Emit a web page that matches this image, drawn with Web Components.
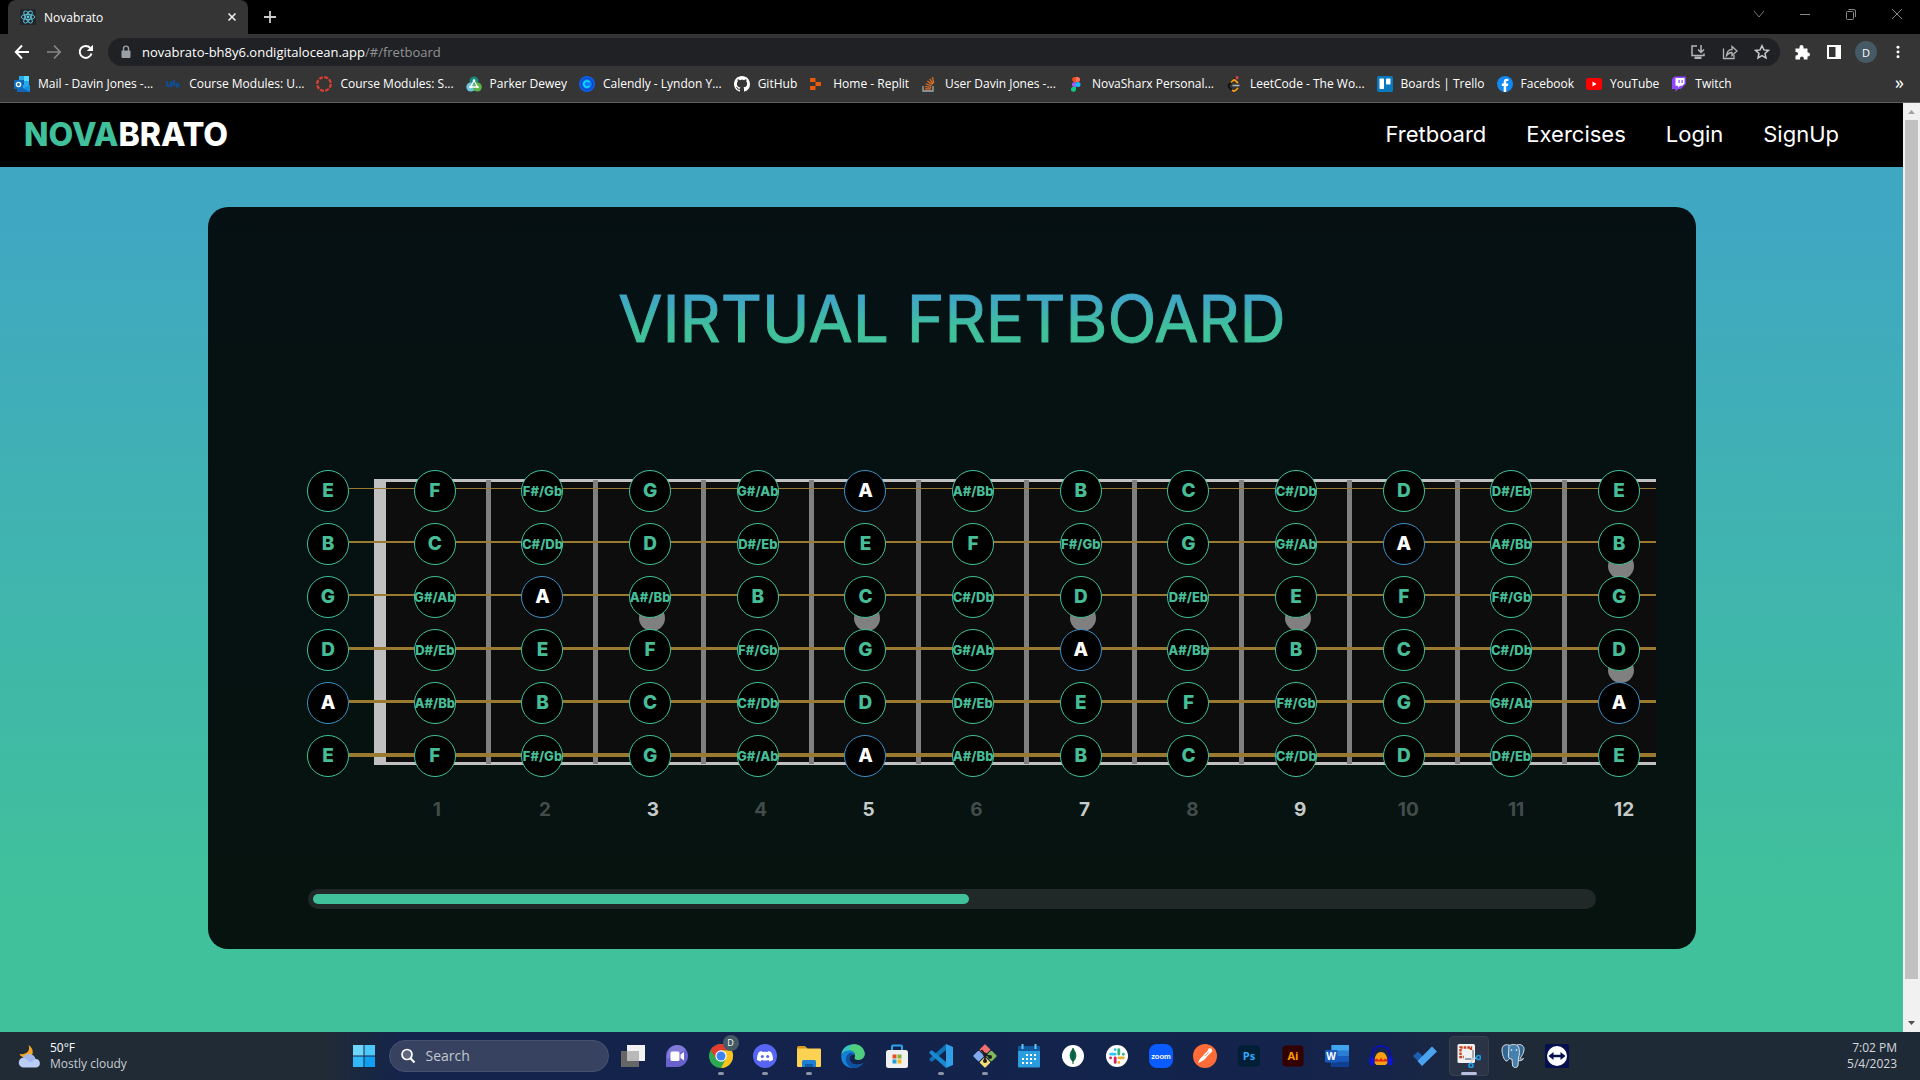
<!DOCTYPE html>
<html lang="en">
<head>
<meta charset="utf-8">
<title>Novabrato</title>
<style>
  html, body { margin: 0; height: 100%; }
  body { display: flex; flex-direction: column; height: 100vh; overflow: hidden; background: #000; font-family: "Open Sans", "Noto Sans", sans-serif; }
  .viewport { flex: 1; min-height: 0; display: flex; }
  .site { flex: 1; min-width: 0; display: flex; flex-direction: column; }
</style>
</head>
<body>
<browser-chrome></browser-chrome>
<div class="viewport">
  <div class="site">
    <site-nav></site-nav>
    <fretboard-page><span slot="title">VIRTUAL FRETBOARD</span></fretboard-page>
  </div>
  <page-scrollbar></page-scrollbar>
</div>
<task-bar></task-bar>

<script>
const define = (name, html, setup) => {
  const template = document.createElement('template');
  template.innerHTML = html;
  customElements.define(name, class extends HTMLElement {
    connectedCallback() {
      if (this.shadowRoot) return;
      const root = this.attachShadow({ mode: 'open' });
      const content = template.content.cloneNode(true);
      if (setup) setup(this, content);
      root.append(content);
    }
  });
};

/* Icons: [viewBox size, markup] */
const ICONS = {
  react: [16, '<rect width="16" height="16" rx="1" fill="#20262b"/><g fill="none" stroke="#61c5dc" stroke-width=".9"><ellipse cx="8" cy="8" rx="6.8" ry="2.6"/><ellipse cx="8" cy="8" rx="6.8" ry="2.6" transform="rotate(60 8 8)"/><ellipse cx="8" cy="8" rx="6.8" ry="2.6" transform="rotate(120 8 8)"/></g><circle cx="8" cy="8" r="1.4" fill="#61c5dc"/>'],
  close: [16, '<path d="M4.5 4.5l7 7M11.5 4.5l-7 7" stroke="#eee" stroke-width="1.6"/>'],
  plus: [16, '<path d="M8 2v12M2 8h12" stroke="#ccc" stroke-width="1.8"/>'],
  chevron: [16, '<path d="M3 5l5 6 5-6" fill="none" stroke="#777"/>'],
  minimize: [16, '<path d="M3 8.5h10" stroke="#888"/>'],
  restore: [16, '<g fill="none" stroke="#888"><rect x="3.5" y="5.5" width="7" height="8" rx="1"/><path d="M5.500 3.500h5.500a1.500 1.500 0 0 1 1.500 1.500v6"/></g>'],
  winclose: [16, '<path d="M3 3l10 10M13 3L3 13" stroke="#888"/>'],
  back: [16, '<path d="M15 8H2M8 1.500L1.800 8 8 14.500" fill="none" stroke="#fff" stroke-width="2"/>'],
  forward: [16, '<path d="M1 8h13M8 1.500L14.200 8 8 14.500" fill="none" stroke="#878787" stroke-width="1.700"/>'],
  reload: [16, '<path d="M13.500 9.500A6 6 0 1 1 12.300 4" fill="none" stroke="#fff" stroke-width="2"/><path d="M15 .8v6.200H8.800z" fill="#fff"/>'],
  lock: [14, '<rect x="2.500" y="5.500" width="9" height="7.500" rx="1" fill="#9aa0a6"/><path d="M4.500 6V3.600a2.500 2.500 0 0 1 5 0V6" fill="none" stroke="#9aa0a6" stroke-width="1.400"/>'],
  install: [16, '<g fill="none" stroke="#b5b5b5" stroke-width="1.500"><path d="M7 2H2v9.500h12V9.500"/><path d="M11 1v7M8 5.500L11 8.500l3-3"/></g><path d="M4.500 12.500h7V15h-7z" fill="#b5b5b5"/>'],
  share: [16, '<g fill="none" stroke="#b5b5b5" stroke-width="1.300"><path d="M1.500 4.500V14.500H12V11"/><path d="M4.500 11.500C5 7.500 7 5.500 10 5.500V2.500l5 4.500-5 4.500V8.500C8 8.500 6 9.500 4.500 11.500z"/></g>'],
  star: [16, '<path d="M8 1.800l1.900 4.100 4.500.5-3.400 3 1 4.500L8 11.600l-4 2.300 1-4.500-3.400-3 4.500-.5z" fill="none" stroke="#c9c9c9" stroke-width="1.500"/>'],
  puzzle: [16, '<path d="M1.500 4.500h4V3a2 2 0 0 1 4 0v1.500h4v4h.5a2 2 0 0 1 0 4h-.5V15.500H9.800V14.500a1.900 1.900 0 0 0-3.800 0v1H1.500v-4h.8a1.700 1.700 0 0 0 0-3.500h-.8z" fill="#fff"/>'],
  panel: [16, '<rect x="2" y="2" width="12" height="12" fill="none" stroke="#fff" stroke-width="2"/><path d="M9.500 2H14v12H9.500z" fill="#fff"/>'],
  menu: [16, '<g fill="#fff"><circle cx="8" cy="2.500" r="1.700"/><circle cx="8" cy="8" r="1.700"/><circle cx="8" cy="13.500" r="1.700"/></g>'],

  outlook: [16, '<path d="M5 0h10v14H5z" fill="#28a8ea"/><path d="M10 0h5v5h-5z" fill="#50d9ff"/><path d="M5 4h5v5H5z" fill="#0364b8"/><path d="M3 9l7 3 6-3v7H3z" fill="#1490df"/><path d="M3 9l13 7H3z" fill="#1066b5"/><rect y="4" width="9" height="9" rx="1" fill="#0f6cbd"/><circle cx="4.500" cy="8.500" r="2.100" fill="none" stroke="#fff" stroke-width="1.400"/>'],
  ucd: [16, '<path d="M2 5v3.500a1.700 1.700 0 0 0 3.500 0V6M6.500 5v6M9 4v6M11.500 7v4M11.500 8.500c3-2.500 3 3 0 2M6.500 8h2.500" fill="none" stroke="#114b8f" stroke-width="2"/>'],
  canvas: [16, '<circle cx="8" cy="8" r="6.800" fill="none" stroke="#e14032" stroke-width="2.200" stroke-dasharray="3.900 1.440"/>'],
  parker: [16, '<circle cx="8" cy="5" r="4.500" fill="#188a78"/><circle cx="4.800" cy="11" r="4.500" fill="#6cc7dd"/><circle cx="11.300" cy="11" r="4.500" fill="#5eb446"/><path d="M8 4.500L4.500 11h7z" fill="none" stroke="#fff" stroke-width="1.300"/><circle cx="8" cy="4.500" r="1.300" fill="#fff"/><circle cx="4.500" cy="11" r="1.300" fill="#fff"/><circle cx="11.500" cy="11" r="1.300" fill="#fff"/>'],
  calendly: [16, '<circle cx="8" cy="8" r="8" fill="#0b5dea"/><circle cx="8" cy="8" r="5.500" fill="#1278ff" stroke="#053fae"/><path d="M10.500 6.300a3.100 3.100 0 1 0 0 3.500" fill="none" stroke="#0ae8f0" stroke-width="1.500"/>'],
  github: [16, '<path fill="#fff" d="M8 0C3.580 0 0 3.580 0 8c0 3.540 2.290 6.530 5.470 7.590.4.070.55-.17.55-.38 0-.19-.01-.82-.01-1.490-2.010.37-2.530-.49-2.690-.94-.09-.23-.48-.94-.82-1.130-.28-.15-.68-.52-.01-.53.63-.01 1.080.58 1.230.82.72 1.210 1.870.87 2.330.66.07-.52.28-.87.51-1.070-1.780-.2-3.640-.89-3.640-3.950 0-.87.31-1.590.82-2.150-.08-.2-.36-1.020.08-2.120 0 0 .67-.21 2.200.82.64-.18 1.320-.27 2-.27s1.360.09 2 .27c1.530-1.040 2.200-.82 2.200-.82.44 1.100.16 1.920.08 2.120.51.56.82 1.270.82 2.150 0 3.070-1.870 3.750-3.650 3.950.29.25.54.73.54 1.480 0 1.070-.01 1.930-.01 2.200 0 .21.15.46.55.38A8 8 0 0 0 16 8c0-4.420-3.580-8-8-8z"/>'],
  replit: [16, '<g fill="#e8590c"><rect x="1" y="2" width="5.500" height="4" rx=".5"/><rect x="6.500" y="6" width="5.500" height="4" rx=".5"/><rect x="1" y="10" width="5.500" height="4" rx=".5"/></g>'],
  stack: [16, '<path d="M2 10v5h10v-5" fill="none" stroke="#aaa" stroke-width="1.300"/><path d="M4 12.800h6M4 10.500l6.200.8M4.700 7.800l5.800 2M6.300 5l5 3.600M8.700 2.800l3.500 5M11.500 1.200l1.200 5.600" stroke="#e87424" stroke-width="1.200"/>'],
  figma: [16, '<path d="M4 3.500A2.700 2.700 0 0 1 6.500 1H8v5H6.500A2.600 2.600 0 0 1 4 3.500z" fill="#f24e1e"/><path d="M8 1h1.500a2.500 2.500 0 0 1 0 5H8z" fill="#ff7262"/><path d="M8 6H6.500a2.500 2.500 0 0 0 0 5H8z" fill="#a259ff"/><circle cx="10" cy="8.500" r="2.500" fill="#1abcfe"/><path d="M8 11H6.500A2.500 2.500 0 1 0 8 13.500z" fill="#0acf83"/>'],
  leet: [16, '<path d="M9.500 2L3.200 8.500c-.8.800-.8 2 0 2.900L6 14.500" fill="none" stroke="#111" stroke-width="1.800"/><path d="M5 6.500L7 4.500c.8-.7 1.800-.5 2.500.2L12 7M6 14c1.500 1.500 3 1 4 0l2-2" fill="none" stroke="#ffa116" stroke-width="1.700"/><path d="M6.500 9.500h7" stroke="#b3b3b3" stroke-width="1.600"/><circle cx="11" cy="1.800" r="1.700" fill="#c44"/>'],
  trello: [16, '<rect width="16" height="16" rx="2" fill="#0b79bf"/><rect x="2.500" y="2.500" width="4.500" height="10.500" rx=".7" fill="#fff"/><rect x="9" y="2.500" width="4.500" height="6" rx=".7" fill="#fff"/>'],
  facebook: [16, '<circle cx="8" cy="8" r="8" fill="#1288f2"/><path d="M6.700 16V10H4.800V7.500h1.900V6c0-2 1.200-3.200 3-3.200l1.700.2v2h-1c-.9 0-1.200.5-1.200 1.100v1.400h2.100L11 10H9.200v6z" fill="#fff"/>'],
  youtube: [16, '<rect y="2" width="16" height="12" rx="2.500" fill="#f00"/><path d="M6.500 5.500v5L10.500 8z" fill="#fff"/>'],
  twitch: [16, '<path d="M3.500.5L1 3v10h3.500v2.800L7.300 13h2.500l5-5V.5z" fill="#9146ff"/><path d="M4.500 2h9v5.500l-2.300 2.300H9l-2 2v-2H4.500z" fill="#fff"/><path d="M7.500 4h1.200v3H7.500zM10.500 4h1.200v3h-1.200z" fill="#9146ff"/>'],

  weather: [24, '<path d="M10.500 1c2 5-1 10-9 9 2 5 11 5 13 0 1-4-1-7-4-9z" fill="#f5a623"/><path d="M6 23.500a5 5 0 0 1-.5-10 6.500 6.500 0 0 1 12 1.500 4.300 4.300 0 0 1 1 8.500z" fill="#bccdf5"/><path d="M5.500 13.500a6.500 6.500 0 0 1 12 1.500l-5 3.500z" fill="#8fa9e6" opacity=".6"/>'],
  windows: [24, '<g><path d="M1 1h10.500v10.500H1z" fill="#6fd6fb"/><path d="M12.500 1H23v10.500H12.500z" fill="#4cc8fa"/><path d="M1 12.500h10.500V23H1z" fill="#2fb9f8"/><path d="M12.500 12.500H23V23H12.500z" fill="#109ef2"/></g>'],
  search: [16, '<circle cx="7" cy="6.500" r="5" fill="#5f6880" stroke="#fff" stroke-width="1.700"/><path d="M10.500 10.300L14.500 14.500" stroke="#fff" stroke-width="2"/>'],
  taskview: [24, '<rect x="0" y="7" width="18" height="16" fill="#666"/><rect x="6" y="1" width="18" height="16" fill="#f2f2f2"/><rect x="6" y="7" width="12" height="10" fill="#b9b9b9"/>'],
  chat: [24, '<path d="M12 1a11 11 0 0 1 0 22H1V12A11 11 0 0 1 12 1z" fill="#6a62cc"/><path d="M12 1a11 11 0 0 1 9 5L2 15v-3A11 11 0 0 1 12 1z" fill="#8d85dd" opacity=".7"/><rect x="5.500" y="7.500" width="9" height="9.500" rx="1.500" fill="#fff"/><path d="M15.500 10.500L19 8v8.500l-3.500-2.500z" fill="#fff"/>'],
  chrome: [24, '<circle cx="12" cy="12" r="12" fill="#2da94f"/><path d="M1.600 6A12 12 0 0 1 22.400 6L12 6.600 7.200 14.800z" fill="#e33b2e"/><path d="M12 6.500h10.700A12 12 0 0 1 12 24l4.800-9.300z" fill="#fcc31e"/><circle cx="12" cy="12" r="5.700" fill="#fff"/><circle cx="12" cy="12" r="4.500" fill="#3c82f0"/>'],
  discord: [24, '<circle cx="12" cy="12" r="12" fill="#5865f2"/><path d="M8.500 7l1 .9a12 12 0 0 1 5 0l1-.9 2.500.9c1.300 2 2.200 5 2 8L16.500 17.500l-1-1.500c-2.300.7-4.700.7-7 0l-1 1.500L4 15.900c-.2-3 .7-6 2-8z" fill="#fff"/><circle cx="9.300" cy="12.600" r="1.500" fill="#5865f2"/><circle cx="14.700" cy="12.600" r="1.500" fill="#5865f2"/>'],
  explorer: [24, '<path d="M0 3.500A1.500 1.500 0 0 1 1.500 2H8l2.500 2.500V8H0z" fill="#d69a1e"/><rect y="4.500" width="24" height="18.500" rx="1" fill="#fcd253"/><path d="M5 23v-5.500A1.500 1.500 0 0 1 6.500 16h11a1.500 1.500 0 0 1 1.500 1.500V23z" fill="#1f7fd4"/><path d="M8 20h8v3H8z" fill="#135aa5"/>'],
  edge: [24, '<path d="M.3 11C1-1.500 20-4 23.500 8c1.200 6-4 9-8.500 7.500-2.500-1-.8-2.500-.8-4.500C13.500 6 5 4.500.3 11z" fill="#35c1c4"/><path d="M13 .3c7 0 10.700 5 10.700 9.700 0 4.500-4.700 7-8.700 5.500-2-.8-.8-2-.8-4C14 8 11 6 8.500 6 8 3 10 .5 13 .3z" fill="#58d365" opacity=".75"/><path d="M.3 11C4.500 5 13.500 5.500 14.200 11 9.500 9 6.500 14 10 18.500c3 3 8.500 2.500 12.500.5C17 27-1 26 .3 11z" fill="#1580d8"/><path d="M10 8.700C5.500 9.500 3.500 15 6 19.500c1.500 2.500 3.500 4 6.500 4.500 4.500 0 8-2 10-5-4 2-9 2.500-12-.5-3-3.500-1.500-8 2-8.500-.7-.8-1.500-1.200-2.500-1.300z" fill="#0e4f9e"/>'],
  store: [24, '<path d="M7 6V2.500A1 1 0 0 1 8 1.500h8a1 1 0 0 1 1 1V6" fill="none" stroke="#2fa4e7" stroke-width="2"/><rect x="1" y="6" width="22" height="18" rx="2.500" fill="#f0f0f0"/><path d="M7.500 10.500H11.500V14.500H7.500z" fill="#e8502a"/><path d="M12.500 10.500H16.500V14.500H12.500z" fill="#7db72f"/><path d="M7.500 15.500H11.500V19.500H7.500z" fill="#1e9de3"/><path d="M12.500 15.500H16.500V19.500H12.500z" fill="#f7b41c"/>'],
  vscode: [24, '<path d="M17 6L3 17.700.6 16.500v-2L17 0z" fill="#1072b5"/><path d="M17 18L3 6.300.6 7.500v2L17 24z" fill="#1989d0"/><path d="M17 0l7 3v18l-7 3z" fill="#2f9fea"/>'],
  git: [24, '<g transform="rotate(45 12 12)"><rect x="3.500" y="3.500" width="8" height="8" rx="1" fill="#f07070"/><rect x="12.500" y="3.500" width="8" height="8" rx="1" fill="#7fb95a"/><rect x="3.500" y="12.500" width="8" height="8" rx="1" fill="#82a8f0"/><rect x="12.500" y="12.500" width="8" height="8" rx="1" fill="#f3dc7a"/></g><path d="M8.500 6l3.500 4.500V17M12 10l5 3" stroke="#1d1d1d" stroke-width="1.700" fill="none"/><circle cx="12" cy="17" r="2" fill="#1d1d1d"/><circle cx="17" cy="13" r="2" fill="#1d1d1d"/><circle cx="12" cy="10.500" r="2" fill="#1d1d1d"/>'],
  calendar: [24, '<rect x="1" y="2" width="22" height="21.500" rx="1" fill="#2a9ce0"/><path d="M1 2h22v5H1z" fill="#10599f"/><path d="M5.500 0v5M18.500 0v5" stroke="#68c6f5" stroke-width="2"/><g fill="#fff"><path d="M9 10h2v2H9zM13 10h2v2h-2zM17 10h2v2h-2zM5 14h2v2H5zM9 14h2v2H9zM13 14h2v2h-2zM17 14h2v2h-2zM5 18h2v2H5zM9 18h2v2H9zM13 18h2v2h-2z"/></g>'],
  mongo: [24, '<circle cx="12" cy="12" r="11" fill="#fff"/><path d="M12 4c2.500 3 3.500 5.500 3.300 8-.2 2.800-1.500 4.500-3.300 6-1.800-1.500-3.100-3.200-3.300-6C8.500 9.500 9.500 7 12 4z" fill="#0e6b4a"/><path d="M12 4v16" stroke="#0a4f38"/>'],
  slack: [24, '<circle cx="12" cy="12" r="11" fill="#fff"/><g stroke-width="2.800" stroke-linecap="round"><path d="M10.200 5.600v.1M5.600 10.200h4.600" stroke="#36c5f0"/><path d="M13.800 5.600v4.600M18.400 10.200v.1" stroke="#2eb67d"/><path d="M13.800 13.800h4.600M13.800 18.400v.1" stroke="#ecb22e"/><path d="M10.200 13.800v4.600M5.600 13.800v.1" stroke="#e01e5a"/></g>'],
  zoom: [24, '<rect width="24" height="24" rx="8" fill="#0b5cff"/><text x="12" y="14.500" font-family="Lato, sans-serif" font-size="8" font-weight="700" text-anchor="middle" fill="#fff">zoom</text>'],
  postman: [24, '<circle cx="12" cy="12" r="12" fill="#ff6c37"/><path d="M5 19c1-3 3-6 6-8l2.500 2.500c-2 2.500-5 4.500-8.500 5.500z" fill="#fff"/><path d="M11 11.500L16 6.500M12.500 13l5-5" stroke="#fff" stroke-width="1.600"/><circle cx="17" cy="6.500" r="2.200" fill="#fff"/>'],
  ps: [24, '<rect x="1" y="1.500" width="22" height="21" rx="3.500" fill="#001e36"/><text x="12" y="16" font-family="Open Sans, sans-serif" font-size="11" font-weight="700" text-anchor="middle" fill="#31a8ff">Ps</text>'],
  ai: [24, '<rect x="1.500" y="1.500" width="21" height="21" rx="3.500" fill="#330000"/><text x="12" y="16" font-family="Open Sans, sans-serif" font-size="11" font-weight="700" text-anchor="middle" fill="#ff9a00">Ai</text>'],
  word: [24, '<rect x="6.500" y="1" width="17.500" height="22" rx="1" fill="#2b7cd3"/><path d="M6.500 1H24v5.500H6.500z" fill="#41a5ee"/><path d="M6.500 12H24v5.500H6.500z" fill="#185abd"/><path d="M6.500 17.500H24V23H6.500z" fill="#103f91"/><rect y="6" width="12.500" height="12.500" rx="1" fill="#185abd"/><text x="6.200" y="16" font-family="Open Sans, sans-serif" font-size="10" font-weight="700" text-anchor="middle" fill="#fff">W</text>'],
  audacity: [24, '<path d="M3 17V11a9 9 0 0 1 18 0v6" fill="none" stroke="#0a10b4" stroke-width="2.200"/><path d="M5.500 19c0-7 2-11 6.500-11s6.500 4 6.500 11l-2 2h-9z" fill="#f5a012"/><path d="M6 15.500l2-1 2 2 2-3 2 3 2-2 2 1v2H6z" fill="#e8240c"/><ellipse cx="2.800" cy="17" rx="2.600" ry="4.500" fill="#0c14d8"/><ellipse cx="21.200" cy="17" rx="2.600" ry="4.500" fill="#0c14d8"/>'],
  todo: [24, '<path d="M0 12l5-4.500 6.500 6.500-4.500 5z" fill="#1c5fb0"/><path d="M4.500 17L19 2.500 24 7.500 9 22z" fill="#4aa3ee"/>'],
  snip: [24, '<rect x=".5" y="0" width="17.500" height="19" rx="1.500" fill="#f1f1f1"/><path d="M14 6V3.500H3.500V13H7" fill="none" stroke="#c5401f" stroke-width="2.400" stroke-dasharray="2.600 1"/><path d="M16 6v9M8 15h9" stroke="#9aa0a8" stroke-width="1.800"/><path d="M14.500 15l5-1M15 15l-1 5" stroke="#cfd4da" stroke-width="1.500"/><circle cx="21.500" cy="13.500" r="2" fill="none" stroke="#1c9be6" stroke-width="1.700"/><circle cx="14" cy="21.500" r="2" fill="none" stroke="#1c9be6" stroke-width="1.700"/>'],
  postgres: [24, '<path d="M8 1C4 0 1 1.500 1 6c0 4 2 10 4 11 1.500.5 2.500-1.500 3.500-2.500V10M16 1c4-1.500 7.500 1 7 5-.4 3-2 6-4 8.500 1 1 2.500.5 3.500 0-1 2-3 2.500-5 2" fill="#336791" stroke="#e8eef4" stroke-width=".9"/><path d="M8 1.500c4-1.500 8-1.500 9.500 1.500 1.500 3 1 8 0 11l-.5 7c-.3 3.500-5 3.500-5.500 0L11 15c-3 .5-4-2-3.500-5z" fill="#4680ad" stroke="#e8eef4" stroke-width=".9"/><circle cx="10.500" cy="6" r=".8" fill="#fff"/><circle cx="15.500" cy="6" r=".8" fill="#fff"/>'],
  teamviewer: [24, '<rect width="24" height="24" rx="1.500" fill="#06104f"/><circle cx="12" cy="12" r="10" fill="#fff"/><path d="M3.500 12L8.500 8v2.700h7V8l5 4-5 4v-2.700h-7V16z" fill="#06104f"/>']
};

define('ui-icon', `<style>:host{display:inline-flex;flex:none}svg{display:block}</style><svg aria-hidden="true"></svg>`, (el, content) => {
  const [box, art] = ICONS[el.getAttribute('name')];
  const size = el.getAttribute('size') || box;
  const svg = content.querySelector('svg');
  svg.setAttribute('width', size);
  svg.setAttribute('height', size);
  svg.setAttribute('viewBox', `0 0 ${box} ${box}`);
  svg.innerHTML = art;
});

define('bookmark-link', `<style>
  :host{display:block;flex:none}
  a{display:flex;align-items:center;gap:8px;color:#fff;text-decoration:none;font-size:12px;line-height:16px;white-space:nowrap}
</style><a href="#"><ui-icon></ui-icon><span><slot></slot></span></a>`, (el, content) => {
  content.querySelector('ui-icon').setAttribute('name', el.getAttribute('icon'));
});

define('browser-chrome', `<style>
  :host{display:block;flex:none;background:#353535;color:#fff;font-size:12px;border-bottom:1px solid #5f5f5f}
  button{all:unset;display:flex;align-items:center;justify-content:center;box-sizing:border-box}
  .strip{display:flex;height:34px;background:#000;padding-left:8px}
  .tab{display:flex;align-items:center;width:240px;box-sizing:border-box;padding:0 8px 0 12px;background:#353535;border-radius:8px 8px 0 0}
  .tab span{flex:1;margin-left:8px}
  .new{width:44px}
  .controls{display:flex;margin-left:auto;height:28px}
  .controls button{width:46px}
  .tools{display:flex;align-items:center;height:34px;padding:0 6px;margin-top:1px}
  .tools button{width:32px;height:32px}
  .omni{flex:1;display:flex;align-items:center;height:28px;border-radius:14px;background:#202124;margin:0 6px;padding:0 2px 0 11px}
  .omni label{display:flex;margin-right:9px}
  .omni input{all:unset;field-sizing:content;font-size:13px;line-height:20px;color:#fff}
  .omni .path{flex:1;font-size:13px;line-height:20px;color:#909396}
  .avatar{width:22px;height:22px;border-radius:50%;background:#455a64;display:flex;align-items:center;justify-content:center;font-size:11px}
  nav{display:flex;align-items:center;height:33px;box-sizing:border-box;gap:12px;padding:0 16px 3px 14px}
  .more{margin-left:auto;font-size:18px;line-height:16px;height:20px;align-items:flex-start}
</style>
<div class="strip">
  <div class="tab"><ui-icon name="react"></ui-icon><span>Novabrato</span><button aria-label="Close tab"><ui-icon name="close"></ui-icon></button></div>
  <button class="new" aria-label="New tab"><ui-icon name="plus"></ui-icon></button>
  <div class="controls">
    <button aria-label="Search tabs"><ui-icon name="chevron"></ui-icon></button>
    <button aria-label="Minimize"><ui-icon name="minimize"></ui-icon></button>
    <button aria-label="Restore"><ui-icon name="restore"></ui-icon></button>
    <button aria-label="Close"><ui-icon name="winclose"></ui-icon></button>
  </div>
</div>
<div class="tools">
  <button aria-label="Back"><ui-icon name="back"></ui-icon></button>
  <button aria-label="Forward"><ui-icon name="forward"></ui-icon></button>
  <button aria-label="Reload"><ui-icon name="reload"></ui-icon></button>
  <div class="omni">
    <label for="url" aria-label="Address"><ui-icon name="lock"></ui-icon></label>
    <input id="url" value="novabrato-bh8y6.ondigitalocean.app"><span class="path">/#/fretboard</span>
    <button aria-label="Install"><ui-icon name="install"></ui-icon></button>
    <button aria-label="Share"><ui-icon name="share"></ui-icon></button>
    <button aria-label="Bookmark"><ui-icon name="star"></ui-icon></button>
  </div>
  <button aria-label="Extensions"><ui-icon name="puzzle"></ui-icon></button>
  <button aria-label="Side panel"><ui-icon name="panel"></ui-icon></button>
  <button aria-label="Profile"><span class="avatar">D</span></button>
  <button aria-label="Menu"><ui-icon name="menu" size="14"></ui-icon></button>
</div>
<nav aria-label="Bookmarks">
  <bookmark-link icon="outlook">Mail - Davin Jones -...</bookmark-link>
  <bookmark-link icon="ucd">Course Modules: U...</bookmark-link>
  <bookmark-link icon="canvas">Course Modules: S...</bookmark-link>
  <bookmark-link icon="parker">Parker Dewey</bookmark-link>
  <bookmark-link icon="calendly">Calendly - Lyndon Y...</bookmark-link>
  <bookmark-link icon="github">GitHub</bookmark-link>
  <bookmark-link icon="replit">Home - Replit</bookmark-link>
  <bookmark-link icon="stack">User Davin Jones -...</bookmark-link>
  <bookmark-link icon="figma">NovaSharx Personal...</bookmark-link>
  <bookmark-link icon="leet">LeetCode - The Wo...</bookmark-link>
  <bookmark-link icon="trello">Boards | Trello</bookmark-link>
  <bookmark-link icon="facebook">Facebook</bookmark-link>
  <bookmark-link icon="youtube">YouTube</bookmark-link>
  <bookmark-link icon="twitch">Twitch</bookmark-link>
  <button class="more" aria-label="More bookmarks">»</button>
</nav>`);

define('site-nav', `<style>
  :host{display:flex;flex:none;align-items:center;justify-content:space-between;height:64px;box-sizing:border-box;padding:0 64px 0 24px;background:#000;color:#fff;font-family:Inter,sans-serif}
  .logo{font-size:32px;line-height:40px;font-weight:800;color:#fff;text-decoration:none}
  .logo b{font-weight:inherit;color:#40c19b}
  nav{display:flex;gap:40px;padding-bottom:2px}
  nav a{font-size:22px;line-height:28px;font-weight:400;color:#fff;text-decoration:none}
</style>
<a class="logo" href="#"><b>NOVA</b>BRATO</a>
<nav><a href="#/fretboard">Fretboard</a><a href="#/exercises">Exercises</a><a href="#/login">Login</a><a href="#/signup">SignUp</a></nav>`);

define('note-dot', `<style>
  :host{display:flex;align-items:center;justify-content:center;flex:none;box-sizing:border-box;width:42px;height:42px;border:1px solid #40c19b;border-radius:50%;background:#000;color:#47bd97;font:800 19px/24px Inter,sans-serif}
  :host([accidental]){font-size:13px}
  :host([root]){border-color:#3f8fc4;color:#fff}
</style><slot></slot>`);

define('fret-neck', `<style>
  :host{display:block;overflow:hidden;font-family:Inter,sans-serif}
  .stack{display:grid;width:calc(100% + 17px)}
  .stack>div{grid-area:1/1}
  .frets,.notes,.numbers{display:grid;grid-template-columns:repeat(12,1fr)}
  .wood{display:flex;margin:15px -2px 17px 67px}
  .nut{width:12px;flex:none;background:#c0c0c0;z-index:1}
  .frets{flex:1;border:solid #c0c0c0;border-width:3px 0;background:#0d0d0d;margin-left:-3px}
  .fret{display:flex;flex-direction:column;align-items:center;justify-content:center;gap:78px;margin:-2px 0;padding-bottom:9px;background:linear-gradient(to left,#808080 5px,transparent 5px)}
  .fret i{width:26px;height:26px;border-radius:50%;background:#808080}
  .strings{display:grid;grid-template-rows:repeat(6,1fr);align-items:center;margin:-2px 0 0 42px;z-index:1}
  .strings i{background:#9a7a30}
  .notes{grid-template-columns:74px repeat(12,1fr);z-index:2}
  .notes>*{height:53px;display:flex;align-items:center;justify-content:center}
  .notes>.open{justify-content:flex-start}
  .numbers{box-sizing:border-box;width:calc(100% + 22px);padding-left:76px;height:55px;align-items:center;justify-items:center;font-size:19px;line-height:24px;font-weight:700;color:#424c4a}
  .numbers .marked{color:#c6cac9}
</style>
<div class="stack"><div class="wood"><div class="nut"></div><div class="frets"></div></div><div class="strings"></div><div class="notes"></div></div>
<div class="numbers"></div>`, (el, content) => {
  const scale = ['C','C#/Db','D','D#/Eb','E','F','F#/Gb','G','G#/Ab','A','A#/Bb','B'];
  const tuning = ['E','B','G','D','A','E'];
  const gauges = [1, 2, 2, 3, 3, 4];
  const marked = [3, 5, 7, 9, 12];
  const frets = Array.from({ length: 12 }, (_, i) => i + 1);
  content.querySelector('.frets').innerHTML = frets.map(n =>
    `<div class="fret">${marked.includes(n) ? (n === 12 ? '<i></i><i></i>' : '<i></i>') : ''}</div>`).join('');
  content.querySelector('.strings').innerHTML = gauges.map(g => `<i style="height:${g}px"></i>`).join('');
  content.querySelector('.notes').innerHTML = tuning.map(open => [0, ...frets].map(n => {
    const note = scale[(scale.indexOf(open) + n) % 12];
    return `<div${n ? '' : ' class="open"'}><note-dot${note.length > 1 ? ' accidental' : ''}${note === 'A' ? ' root' : ''}>${note}</note-dot></div>`;
  }).join('')).join('');
  content.querySelector('.numbers').innerHTML = frets.map(n => `<span${marked.includes(n) ? ' class="marked"' : ''}>${n}</span>`).join('');
});

define('fretboard-page', `<style>
  :host{display:block;flex:1;box-sizing:border-box;padding:40px 207px 0 208px;background:linear-gradient(#40a7c3 5%,#40c19b 85%)}
  section{border-radius:20px;background:rgba(0,0,0,.9);padding:80px 0 40px}
  h1{margin:0 0 113px;text-align:center;font:400 64px/64px Inter,sans-serif}
  h1 span{background:linear-gradient(#40a6c5 25%,#40c19b 62%);-webkit-background-clip:text;background-clip:text;color:transparent;-webkit-text-stroke:1px transparent}
  fret-neck{margin:0 40px 0 99px}
  .track{height:20px;box-sizing:border-box;margin:52px 100px 0;padding:5px;border-radius:10px;background:#202928}
  .thumb{width:51.3%;height:10px;border-radius:5px;background:#40c19b}
</style>
<section>
  <h1><span><slot name="title"></slot></span></h1>
  <fret-neck></fret-neck>
  <div class="track" role="scrollbar" aria-orientation="horizontal" aria-valuenow="0"><div class="thumb"></div></div>
</section>`);

define('page-scrollbar', `<style>
  :host{display:flex;flex-direction:column;align-items:center;flex:none;width:17px;background:#f1f1f1}
  svg{display:block;flex:none}
  .run{flex:1;width:100%;display:flex;flex-direction:column;align-items:center}
  .thumb{width:13px;height:96%;background:#c1c1c1}
</style>
<svg width="17" height="17"><path d="M5 11l3.500-4 3.500 4z" fill="#a3a3a3"/></svg>
<div class="run"><div class="thumb"></div></div>
<svg width="17" height="17"><path d="M5 6l3.500 4L12 6z" fill="#505050"/></svg>`);

define('task-app', `<style>
  :host{display:block;flex:none;width:44px;height:48px}
  button{all:unset;position:relative;display:flex;box-sizing:border-box;width:40px;height:40px;margin:4px 2px;border-radius:4px;align-items:center;justify-content:center}
  :host([running]) button::after,:host([active]) button::after{content:"";position:absolute;bottom:1px;width:6px;height:3px;border-radius:2px;background:#8d94a8}
  :host([active]) button{background:#2b3446;border:1px solid #363f50}
  :host([active]) button::after{width:16px;background:#b8bedd;bottom:0}
  .badge{position:absolute;top:-1px;right:2px;width:16px;height:16px;border-radius:50%;background:#455a64;color:#fff;font-size:9px;line-height:16px;text-align:center}
</style><button><ui-icon size="24"></ui-icon></button>`, (el, content) => {
  const button = content.querySelector('button');
  button.setAttribute('aria-label', el.getAttribute('icon'));
  content.querySelector('ui-icon').setAttribute('name', el.getAttribute('icon'));
  if (el.hasAttribute('badge')) button.insertAdjacentHTML('beforeend', `<span class="badge">${el.getAttribute('badge')}</span>`);
});

define('task-bar', `<style>
  :host{display:grid;flex:none;grid-template-columns:1fr auto 1fr;align-items:center;height:48px;box-sizing:border-box;color:#fff;font-size:12px;line-height:16px;background:linear-gradient(90deg,#202b36 17%,#14234b 21%,#12234c 60%,#16244a 72%,#1f2a37 79%)}
  .weather{display:flex;align-items:center;gap:8px;padding-left:18px}
  .weather p,.clock p{margin:0}
  .weather p+p{color:#c9cdd2}
  .apps{display:flex;align-items:center}
  .find{display:flex;align-items:center;gap:10px;width:220px;height:32px;box-sizing:border-box;border:1px solid #46526f;border-radius:16px;background:#36425f;padding:0 10px;margin:0 2px 0 3px}
  .find label{display:flex}
  .find input{all:unset;flex:1;min-width:0;font-size:14px;line-height:20px}
  .find input::placeholder{color:#c3c8d2;opacity:1}
  .clock{text-align:right;padding-right:23px;color:#d5d8dc}
</style>
<div class="weather"><ui-icon name="weather"></ui-icon><div><p>50°F</p><p>Mostly cloudy</p></div></div>
<div class="apps">
  <task-app icon="windows"></task-app>
  <div class="find"><label for="q" aria-label="Search"><ui-icon name="search"></ui-icon></label><input id="q" placeholder="Search"></div>
  <task-app icon="taskview"></task-app><task-app icon="chat"></task-app><task-app icon="chrome" running badge="D"></task-app>
  <task-app icon="discord" running></task-app><task-app icon="explorer" running></task-app><task-app icon="edge"></task-app>
  <task-app icon="store"></task-app><task-app icon="vscode" running></task-app><task-app icon="git" running></task-app>
  <task-app icon="calendar"></task-app><task-app icon="mongo"></task-app><task-app icon="slack"></task-app>
  <task-app icon="zoom"></task-app><task-app icon="postman"></task-app><task-app icon="ps"></task-app><task-app icon="ai"></task-app>
  <task-app icon="word"></task-app><task-app icon="audacity"></task-app><task-app icon="todo"></task-app>
  <task-app icon="snip" active></task-app><task-app icon="postgres"></task-app><task-app icon="teamviewer"></task-app>
</div>
<div class="clock"><p>7:02 PM</p><p>5/4/2023</p></div>`);
</script>
</body>
</html>
